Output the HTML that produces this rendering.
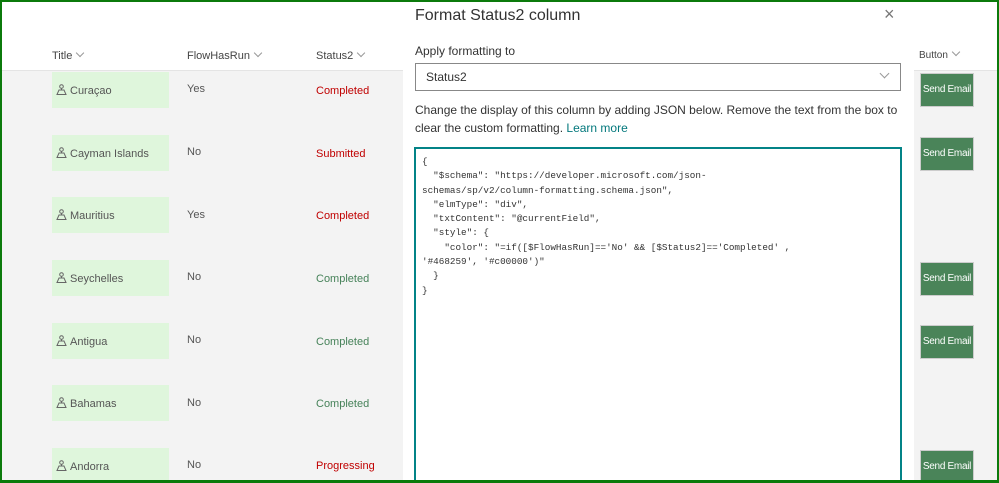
<!DOCTYPE html>
<html><head><meta charset="utf-8"><style>
*{margin:0;padding:0;box-sizing:border-box}
html,body{width:999px;height:483px;overflow:hidden}
body{background:#fff;font-family:"Liberation Sans",sans-serif;position:relative}
.frame{position:absolute;left:0;top:0;width:999px;height:483px;border:2px solid #0b7a0b;border-bottom-width:3px;z-index:10;pointer-events:none}
.abs{position:absolute}
.hdr{font-size:11px;color:#444;top:50px}
.chev{display:inline-block;width:6px;height:6px;border-right:1px solid #999;border-bottom:1px solid #999;transform:rotate(45deg);margin-left:5px;position:relative;top:-3px}
.gray{background:#f3f3f3}
.tcell{position:absolute;left:52px;width:117px;height:36px;background:#dff6dc;font-size:11px;color:#555;padding:13px 0 0 18px}
.tcell svg{position:absolute;left:4px;top:12px}
.fl{position:absolute;left:187px;font-size:11px;color:#555}
.st{position:absolute;left:316px;font-size:11px}
.btn{position:absolute;left:920px;width:54px;height:34px;background:#4a8459;color:#fff;font-size:10px;text-align:center;line-height:32px;border:1px solid #ccc;white-space:nowrap;overflow:hidden;letter-spacing:-0.3px}
</style></head><body>
<div class="frame"></div>
<div class="abs gray" style="left:0;top:71px;width:403px;height:412px"></div>
<div class="abs" style="left:0;top:70px;width:403px;height:1px;background:#e4e4e4"></div>
<div class="abs gray" style="left:914px;top:71px;width:85px;height:412px"></div>
<div class="abs" style="left:914px;top:70px;width:85px;height:1px;background:#e4e4e4"></div>
<div class="abs hdr" style="left:52px">Title<span class="chev"></span></div>
<div class="abs hdr" style="left:187px">FlowHasRun<span class="chev"></span></div>
<div class="abs hdr" style="left:316px">Status2<span class="chev"></span></div>
<div class="abs hdr" style="left:919px;font-size:10px">Button<span class="chev"></span></div>

<div class="tcell" style="top:72px"><svg width="11" height="11" viewBox="0 0 11 11" fill="none" stroke="#666"><circle cx="5.5" cy="2.5" r="1.8"/><path d="M5.5 4.3V6M1 10.5L3 6H8L10 10.5Z"/></svg>Curaçao</div>
<div class="tcell" style="top:135px"><svg width="11" height="11" viewBox="0 0 11 11" fill="none" stroke="#666"><circle cx="5.5" cy="2.5" r="1.8"/><path d="M5.5 4.3V6M1 10.5L3 6H8L10 10.5Z"/></svg>Cayman Islands</div>
<div class="tcell" style="top:197px"><svg width="11" height="11" viewBox="0 0 11 11" fill="none" stroke="#666"><circle cx="5.5" cy="2.5" r="1.8"/><path d="M5.5 4.3V6M1 10.5L3 6H8L10 10.5Z"/></svg>Mauritius</div>
<div class="tcell" style="top:260px"><svg width="11" height="11" viewBox="0 0 11 11" fill="none" stroke="#666"><circle cx="5.5" cy="2.5" r="1.8"/><path d="M5.5 4.3V6M1 10.5L3 6H8L10 10.5Z"/></svg>Seychelles</div>
<div class="tcell" style="top:323px"><svg width="11" height="11" viewBox="0 0 11 11" fill="none" stroke="#666"><circle cx="5.5" cy="2.5" r="1.8"/><path d="M5.5 4.3V6M1 10.5L3 6H8L10 10.5Z"/></svg>Antigua</div>
<div class="tcell" style="top:385px"><svg width="11" height="11" viewBox="0 0 11 11" fill="none" stroke="#666"><circle cx="5.5" cy="2.5" r="1.8"/><path d="M5.5 4.3V6M1 10.5L3 6H8L10 10.5Z"/></svg>Bahamas</div>
<div class="tcell" style="top:448px"><svg width="11" height="11" viewBox="0 0 11 11" fill="none" stroke="#666"><circle cx="5.5" cy="2.5" r="1.8"/><path d="M5.5 4.3V6M1 10.5L3 6H8L10 10.5Z"/></svg>Andorra</div>

<div class="fl" style="top:83px">Yes</div>
<div class="fl" style="top:146px">No</div>
<div class="fl" style="top:209px">Yes</div>
<div class="fl" style="top:271px">No</div>
<div class="fl" style="top:334px">No</div>
<div class="fl" style="top:397px">No</div>
<div class="fl" style="top:459px">No</div>

<div class="st" style="top:85px;color:#c00000">Completed</div>
<div class="st" style="top:148px;color:#c00000">Submitted</div>
<div class="st" style="top:210px;color:#c00000">Completed</div>
<div class="st" style="top:273px;color:#468259">Completed</div>
<div class="st" style="top:336px;color:#468259">Completed</div>
<div class="st" style="top:398px;color:#468259">Completed</div>
<div class="st" style="top:460px;color:#c00000">Progressing</div>

<div class="btn" style="top:73px">Send Email</div>
<div class="btn" style="top:137px">Send Email</div>
<div class="btn" style="top:262px">Send Email</div>
<div class="btn" style="top:325px">Send Email</div>
<div class="btn" style="top:450px">Send Email</div>

<div class="abs" style="left:415px;top:7px;font-size:16px;color:#333">Format Status2 column</div>
<div class="abs" style="left:884px;top:4px;font-size:18px;color:#777;font-weight:300">×</div>
<div class="abs" style="left:415px;top:44px;font-size:12px;color:#333">Apply formatting to</div>
<div class="abs" style="left:415px;top:63px;width:486px;height:28px;border:1px solid #888;font-size:12px;color:#333;padding:6px 0 0 10px">Status2<span style="position:absolute;right:12px;top:6px;width:7px;height:7px;border-right:1px solid #999;border-bottom:1px solid #999;transform:rotate(45deg)"></span></div>
<div class="abs" style="left:415px;top:101px;width:490px;font-size:12px;line-height:18px;color:#333">Change the display of this column by adding JSON below. Remove the text from the box to clear the custom formatting. <span style="color:#03787c">Learn more</span></div>
<div class="abs" style="left:414px;top:147px;width:488px;height:340px;border:2px solid #038387;padding:6px 0 0 6px"><pre style="font-family:'Liberation Mono',monospace;font-size:9.3px;line-height:14.3px;color:#333">{
  "$schema": "https://developer.microsoft.com/json-
schemas/sp/v2/column-formatting.schema.json",
  "elmType": "div",
  "txtContent": "@currentField",
  "style": {
    "color": "=if([$FlowHasRun]=='No' &amp;&amp; [$Status2]=='Completed' ,
'#468259', '#c00000')"
  }
}</pre></div>
</body></html>
